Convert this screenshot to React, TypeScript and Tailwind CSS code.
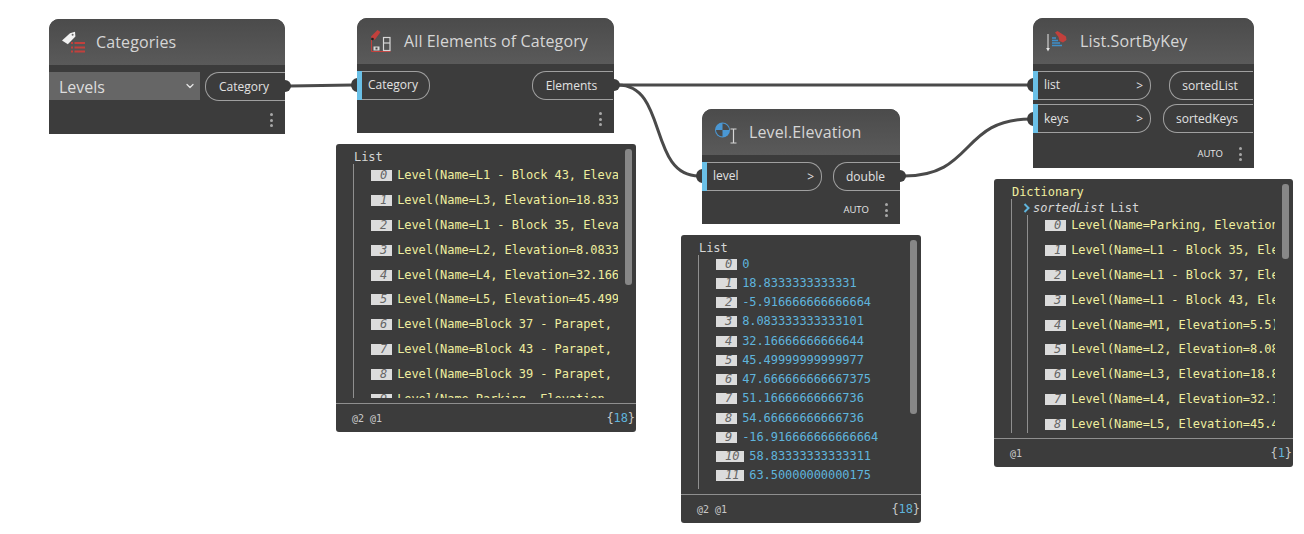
import type { ReactNode } from "react"
import { ChevronDown } from "lucide-react"

const sans = "font-['Open_Sans','Noto_Sans',sans-serif]"
const mono = "font-['DejaVu_Sans_Mono','Liberation_Mono',monospace]"

const levelRows = [
  "Level(Name=L1 - Block 43, Elevation=0.000)",
  "Level(Name=L3, Elevation=18.833)",
  "Level(Name=L1 - Block 35, Elevation=-5.917)",
  "Level(Name=L2, Elevation=8.0833)",
  "Level(Name=L4, Elevation=32.1667)",
  "Level(Name=L5, Elevation=45.4999)",
  "Level(Name=Block 37 - Parapet, Elevation=47.667)",
  "Level(Name=Block 43 - Parapet, Elevation=51.167)",
  "Level(Name=Block 39 - Parapet, Elevation=54.667)",
  "Level(Name=Parking, Elevation=-16.917)",
]

const elevationRows = [
  "0",
  "18.8333333333331",
  "-5.916666666666664",
  "8.083333333333101",
  "32.16666666666644",
  "45.49999999999977",
  "47.666666666667375",
  "51.16666666666736",
  "54.66666666666736",
  "-16.916666666666664",
  "58.83333333333311",
  "63.50000000000175",
  "68.00000000000175",
]

const sortedRows = [
  "Level(Name=Parking, Elevation=-16.917)",
  "Level(Name=L1 - Block 35, Elevation=-5.917)",
  "Level(Name=L1 - Block 37, Elevation=-5.917)",
  "Level(Name=L1 - Block 43, Elevation=0.000)",
  "Level(Name=M1, Elevation=5.5)",
  "Level(Name=L2, Elevation=8.0833)",
  "Level(Name=L3, Elevation=18.833)",
  "Level(Name=L4, Elevation=32.1667)",
  "Level(Name=L5, Elevation=45.4999)",
]

function CategoriesIcon() {
  return (
    <svg width="24" height="24" viewBox="0 0 24 24">
      <path d="M1 10.5 9 3.2l5-1.4.4 4.6-7.6 7.8z" fill="#f1f1f1" />
      <circle cx="11.6" cy="4.8" r="1" fill="#666" />
      <path d="M10 13h2M10 17.5h2M10 21.5h2" stroke="#c2403c" strokeWidth="2" />
      <path d="M13.5 13H24M13.5 17.5H24M13.5 21.5H24" stroke="#c2403c" strokeWidth="2" />
    </svg>
  )
}

function ElementsIcon() {
  return (
    <svg width="24" height="24" viewBox="0 0 24 24">
      <path d="M2 7.5 8.5 1l3 2-5.500 7.500-3 .5z" fill="#c2403c" />
      <circle cx="3.500" cy="10" r="1.300" fill="#222" />
      <path d="M2.500 11v11.500h19" fill="none" stroke="#c2403c" strokeWidth="1" />
      <rect x="4.500" y="17.500" width="6" height="4" fill="#d8d8d8" />
      <path d="M6.500 18.500h2v2h-2z" fill="#444" />
      <rect x="14.500" y="8.500" width="6.500" height="13" fill="none" stroke="#d8d8d8" strokeWidth="1.200" />
      <path d="M14.500 14h6.500" stroke="#d8d8d8" strokeWidth="1.200" />
    </svg>
  )
}

function ElevationIcon() {
  return (
    <svg width="24" height="24" viewBox="0 0 24 24">
      <circle cx="8.500" cy="10" r="7.500" fill="#4a97d3" />
      <path d="M8.500 10V3.500A6.500 6.500 0 0 1 15 10zM8.500 10v6.500A6.500 6.500 0 0 1 2 10z" fill="#4a4a4a" />
      <path d="M16.500 9h6M16.500 23h6M19.500 9v14" stroke="#d6d6d6" strokeWidth="1.200" fill="none" />
    </svg>
  )
}

function SortIcon() {
  return (
    <svg width="24" height="24" viewBox="0 0 24 24">
      <path d="M3 5v15" stroke="#e6e6e6" strokeWidth="1" />
      <path d="M1.200 19h3.600L3 22.500z" fill="#e6e6e6" />
      <path d="M7 9h4M7 11.500h6M7 14h8M7 16.500h10" stroke="#3f8fc9" strokeWidth="1.500" />
      <path d="M10 3.500 12.500 2 21 7.500l.5 3.500-3.500 2.500-3.500-1.500-1-4z" fill="#c2403c" />
    </svg>
  )
}

function InputPort({ label, width }: { label: string; width: string }) {
  return (
    <div className="flex h-[29px]">
      <div className="w-[5px] bg-[#6ac0e7]" />
      <div className={`flex items-center justify-between rounded-r-[14px] border border-l-0 border-[#a0a0a0] pl-[6px] pr-[7px] ${width}`}>
        <span className={`text-[12px] leading-4 text-[#e2e2e2] ${label === "keys" ? "" : "pb-[1px]"}`}>{label}</span>
        <span className="text-[12px] leading-4 text-[#e2e2e2]">{label === "Category" ? "" : ">"}</span>
      </div>
    </div>
  )
}

function OutputPort({ label, width }: { label: string; width: string }) {
  return (
    <div className={`flex h-[29px] items-center justify-center rounded-l-[14px] border border-r-0 border-[#a0a0a0] pr-[3px] ${width}`}>
      <span className="text-[12px] leading-4 text-[#e2e2e2]">{label}</span>
    </div>
  )
}

function Node({
  title,
  icon,
  className,
  auto,
  children,
}: {
  title: string
  icon: ReactNode
  className: string
  auto?: boolean
  children: ReactNode
}) {
  return (
    <div className={`absolute flex flex-col rounded-t-[10px] bg-[#3c3c3c] ${sans} ${className}`}>
      <div className="flex h-[46px] shrink-0 items-center gap-[11px] rounded-t-[10px] bg-gradient-to-b from-[#4b4b4b] to-[#5a5a5a] pl-[12px]">
        <div className="h-6 w-6 shrink-0">{icon}</div>
        <span className="pb-[1px] text-[16px] leading-5 tracking-[0.12px] text-[#d6d6d6]">{title}</span>
      </div>
      <div className="mt-[7px] flex flex-col gap-[4px]">{children}</div>
      <div className="mt-auto flex h-[28px] items-center justify-end pr-[12px]">
        {auto && <span className="mr-[16px] pt-[1px] text-[9.5px] font-medium text-[#e6e6e6]">AUTO</span>}
        <div className="flex flex-col gap-[2.500px]">
          <div className="h-[3px] w-[3px] rounded-full bg-[#a8a8a8]" />
          <div className="h-[3px] w-[3px] rounded-full bg-[#a8a8a8]" />
          <div className="h-[3px] w-[3px] rounded-full bg-[#a8a8a8]" />
        </div>
      </div>
    </div>
  )
}

function IndexBadge({ n }: { n: number }) {
  return (
    <span className="mt-[2px] block h-[11px] shrink-0 bg-[#dcdcdc] pl-[9px] pr-[5px] text-[12px] italic leading-[11px] tracking-[-0.07px] text-[#666666]">
      {n}
    </span>
  )
}

function Rows({ rows, tone, rowHeight }: { rows: string[]; tone: string; rowHeight: string }) {
  return (
    <>
      {rows.map((row, i) => (
        <div key={i} className={`flex shrink-0 items-start gap-[5px] ${rowHeight}`}>
          <IndexBadge n={i} />
          <span className={`whitespace-pre text-[12px] leading-[14px] tracking-[-0.07px] ${tone}`}>{row}</span>
        </div>
      ))}
    </>
  )
}

function Preview({
  className,
  levels,
  count,
  thumb,
  children,
}: {
  className: string
  levels: string
  count: string
  thumb: string
  children: ReactNode
}) {
  return (
    <div className={`absolute flex h-[288px] flex-col rounded-[3px] bg-[#3c3c3c] ${mono} ${className}`}>
      <div className={`absolute right-[4px] top-[5px] w-[7px] rounded-[3px] bg-[#878787] ${thumb}`} />
      <div className="mb-[5px] mr-[18px] min-h-0 flex-1 overflow-hidden pl-[17px] pt-[6px]">{children}</div>
      <div className="flex h-[29px] shrink-0 items-center justify-between border-t border-[#8f8f8f] pl-[16px] pr-[1px]">
        <span className="text-[10px] text-[#c8c8c8]">{levels}</span>
        <span className="text-[12px] tracking-[-0.07px] text-[#c8c8c8]">
          {"{"}
          <span className="text-[#5fb4dc]">{count}</span>
          {"}"}
        </span>
      </div>
    </div>
  )
}

function Wires() {
  return (
    <svg className="absolute inset-0" width="1304" height="534" viewBox="0 0 1304 534">
      <g fill="none" stroke="#4a4a4a" strokeWidth="3">
        <path d="M290 86 353 85" />
        <path d="M618 85H1031" />
        <path d="M618 85C668 85 648 176 699 176" />
        <path d="M904 176C975 176 960 119 1031 119" />
      </g>
      <g fill="#3c3c3c">
        <path d="M285 80a6 6 0 0 1 6 6 6 6 0 0 1-6 6z" />
        <path d="M357 78a7 7 0 0 0-6 7 7 7 0 0 0 6 7z" />
        <path d="M614 79a6 6 0 0 1 6 6 6 6 0 0 1-6 6z" />
        <path d="M702 169a7 7 0 0 0-6 7 7 7 0 0 0 6 7z" />
        <path d="M900 170a6 6 0 0 1 6 6 6 6 0 0 1-6 6z" />
        <path d="M1033 78a7 7 0 0 0-6 7 7 7 0 0 0 6 7z" />
        <path d="M1033 112a7 7 0 0 0-6 7 7 7 0 0 0 6 7z" />
      </g>
    </svg>
  )
}

export default function App() {
  return (
    <div className="relative h-[534px] w-[1304px] overflow-hidden bg-white">
      <Wires />

      <Node title="Categories" icon={<CategoriesIcon />} className="left-[49px] top-[19px] h-[115px] w-[236px]">
        <div className="flex items-start gap-[5px]">
          <div className="flex h-[28px] w-[151px] items-center justify-between bg-[#666666] pl-[10px] pr-[4px]">
            <span className="pt-[2px] text-[16px] leading-5 text-[#dddddd]">Levels</span>
            <ChevronDown size={12} strokeWidth={2.500} className="text-[#e6e6e6]" />
          </div>
          <OutputPort label="Category" width="w-[80px]" />
        </div>
      </Node>

      <Node title="All Elements of Category" icon={<ElementsIcon />} className="left-[357px] top-[18px] h-[115px] w-[257px]">
        <div className="flex justify-between pr-[1px]">
          <InputPort label="Category" width="w-[68px]" />
          <OutputPort label="Elements" width="w-[81px]" />
        </div>
      </Node>

      <Node title="Level.Elevation" icon={<ElevationIcon />} auto className="left-[702px] top-[109px] h-[115px] w-[198px]">
        <div className="flex justify-between">
          <InputPort label="level" width="w-[115px]" />
          <OutputPort label="double" width="w-[67px]" />
        </div>
      </Node>

      <Node title="List.SortByKey" icon={<SortIcon />} auto className="left-[1033px] top-[18px] h-[150px] w-[221px]">
        <div className="flex justify-between pr-[1px]">
          <InputPort label="list" width="w-[113px]" />
          <OutputPort label="sortedList" width="w-[84px]" />
        </div>
        <div className="flex justify-between pr-[1px]">
          <InputPort label="keys" width="w-[113px]" />
          <OutputPort label="sortedKeys" width="w-[90px]" />
        </div>
      </Node>

      <Preview className="left-[336px] top-[144px] w-[300px]" levels="@2 @1" count="18" thumb="h-[136px]">
        <div className="pl-[1px] text-[12px] leading-[14px] tracking-[-0.07px] text-[#d6d6d6]">List</div>
        <div className="h-[300px] border-l border-[#8f8f8f] pl-[17px] pt-[4px]">
          <Rows rows={levelRows} tone="text-[#efee9f]" rowHeight="h-[24.900px]" />
        </div>
      </Preview>

      <Preview className="left-[681px] top-[235px] w-[240px]" levels="@2 @1" count="18" thumb="h-[174px]">
        <div className="pl-[1px] text-[12px] leading-[14px] tracking-[-0.07px] text-[#d6d6d6]">List</div>
        <div className="h-[300px] border-l border-[#8f8f8f] pl-[17px] pt-[1.500px]">
          <Rows rows={elevationRows} tone="text-[#5fb4dc]" rowHeight="h-[19.250px]" />
        </div>
      </Preview>

      <Preview className="left-[994px] top-[179px] w-[299px]" levels="@1" count="1" thumb="h-[75px]">
        <div className="pl-[1px] text-[12px] leading-[14px] tracking-[-0.07px] text-[#efee9f]">Dictionary</div>
        <div className="h-[300px] border-l border-[#8f8f8f] pl-[11px] pt-[2px]">
          <div className="flex h-[14px] items-center text-[12px] leading-[14px] tracking-[-0.07px]">
            <svg width="8" height="10" viewBox="0 0 8 10" className="mr-[2px] shrink-0">
              <path d="M1.500 1 5.500 5l-4 4" fill="none" stroke="#5fb4dc" strokeWidth="2" />
            </svg>
            <span className="italic text-[#d6d6d6]">sortedList</span>
            <span className="ml-[6px] text-[#d6d6d6]">List</span>
          </div>
          <div className="ml-[4px] h-[300px] border-l border-[#8f8f8f] pl-[17px] pt-[3px]">
            <Rows rows={sortedRows} tone="text-[#efee9f]" rowHeight="h-[24.900px]" />
          </div>
        </div>
      </Preview>
    </div>
  )
}
